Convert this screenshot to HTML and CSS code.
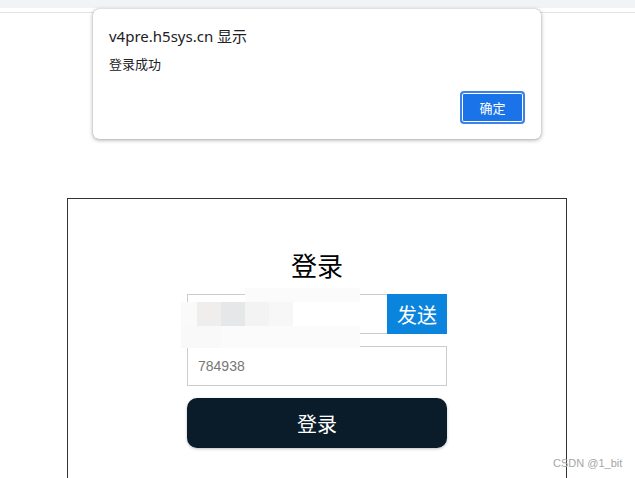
FILE: index.html
```html
<!DOCTYPE html>
<html lang="zh">
<head>
<meta charset="utf-8">
<title>登录</title>
<link rel="stylesheet" href="styles.css">
</head>
<body>
<div class="chrome-bar"></div>
<div class="chrome-line"></div>
<main class="login-box">
  <h1 class="login-title">登录</h1>
  <form class="login-form">
    <div class="phone-row">
      <input class="phone-input" type="text" value="">
      <button type="button" class="send-btn">发送</button>
      <div class="mosaic">
        <div class="mosaic-top"></div>
        <div class="mosaic-mid">
          <span class="m1"></span><span class="m2"></span><span class="m3"></span><span class="m4"></span><span class="m5"></span><span class="m6"></span>
        </div>
        <div class="mosaic-bot">
          <span class="b1"></span><span class="b2"></span><span class="b3"></span>
        </div>
      </div>
    </div>
    <input class="code-input" type="text" value="784938">
    <button type="button" class="login-btn">登录</button>
  </form>
</main>
<div class="alert-dialog">
  <div class="alert-title">v4pre.h5sys.cn 显示</div>
  <div class="alert-msg">登录成功</div>
  <div class="alert-actions"><button type="button" class="alert-ok">确定</button></div>
</div>
<div class="watermark">CSDN @1_bit</div>
</body>
</html>
```
FILE: styles.css
```css
html, body {
  margin: 0;
  padding: 0;
  background: #fff;
  width: 635px;
  height: 478px;
  overflow: hidden;
  font-family: "Noto Sans", "Noto Sans CJK SC", sans-serif;
}
.chrome-bar {
  height: 8px;
  background: #f1f3f4;
}
.chrome-line {
  margin-top: 4px;
  height: 1px;
  background: #e3e3e3;
}
.login-box {
  box-sizing: border-box;
  margin: 185px 0 0 67px;
  width: 500px;
  height: 280px;
  border: 1px solid #333;
  border-bottom: none;
  display: flex;
  flex-direction: column;
  align-items: center;
  padding-top: 48px;
}
.login-title {
  margin: 0;
  font-family: "Noto Sans CJK SC", sans-serif;
  font-size: 26px;
  font-weight: 400;
  line-height: 36px;
  color: #000;
}
.login-form {
  margin-top: 11px;
  width: 260px;
  display: flex;
  flex-direction: column;
  gap: 12px;
}
.phone-row {
  position: relative;
  display: flex;
  height: 40px;
}
.phone-input {
  box-sizing: border-box;
  flex: 1;
  height: 40px;
  border: 1px solid #ccc;
  border-right: none;
  margin: 0;
  outline: none;
}
.send-btn {
  width: 60px;
  height: 40px;
  margin: 0;
  border: none;
  background: #0a84dc;
  color: #fff;
  font-family: "Noto Sans CJK SC", sans-serif;
  font-size: 20px;
  padding: 0;
}
.mosaic {
  position: absolute;
  left: -6px;
  top: -6px;
  width: 179px;
}
.mosaic-top {
  margin-left: 64px;
  width: 115px;
  height: 14px;
  background: #fbfbfb;
}
.mosaic-mid, .mosaic-bot {
  display: flex;
}
.mosaic-mid span {
  height: 24px;
  width: 24px;
}
.mosaic-mid .m1 { width: 16px; background: #fafafa; }
.mosaic-mid .m2 { background: #efeeec; }
.mosaic-mid .m3 { background: #e6e7e9; }
.mosaic-mid .m4 { background: #f3f3f3; }
.mosaic-mid .m5 { background: #f7f7f7; }
.mosaic-mid .m6 { width: 67px; background: #fff; }
.mosaic-bot span { height: 22px; }
.mosaic-bot .b1 { width: 16px; background: #f9f9f9; }
.mosaic-bot .b2 { width: 24px; background: #f9f9f9; }
.mosaic-bot .b3 { width: 139px; background: #fbfbfb; }
.code-input {
  box-sizing: border-box;
  width: 260px;
  height: 40px;
  margin: 0;
  border: 1px solid #ccc;
  padding: 0 10px;
  font-family: "Liberation Sans", Arial, sans-serif;
  font-size: 14px;
  color: #777;
  outline: none;
}
.login-btn {
  width: 260px;
  height: 50px;
  margin: 0;
  border: none;
  border-radius: 10px;
  background: #0a1c2a;
  color: #fff;
  font-family: "Noto Sans CJK SC", sans-serif;
  font-size: 20px;
  box-shadow: 0 1px 3px rgba(0,0,0,0.25);
}
.alert-dialog {
  position: absolute;
  left: 93px;
  top: 9px;
  width: 448px;
  height: 130px;
  box-sizing: border-box;
  background: #fff;
  border-radius: 6px;
  box-shadow: 0 1px 4px rgba(0,0,0,0.35), 0 0 1px rgba(0,0,0,0.3);
  padding: 17px 16px 0 16px;
}
.alert-title {
  font-family: "Noto Sans", "Noto Sans CJK SC", sans-serif;
  font-size: 15px;
  line-height: 20px;
  color: #202124;
}
.alert-msg {
  margin-top: 9px;
  font-family: "Noto Sans CJK SC", sans-serif;
  font-size: 13px;
  line-height: 18px;
  color: #202124;
}
.alert-actions {
  display: flex;
  justify-content: flex-end;
  margin-top: 18px;
}
.alert-ok {
  box-sizing: border-box;
  width: 65px;
  height: 33px;
  margin: 0;
  border: 2px solid #3b82ea;
  border-radius: 4px;
  background: #1a73e8;
  box-shadow: inset 0 0 0 1px #fff;
  color: #fff;
  font-family: "Noto Sans CJK SC", sans-serif;
  font-size: 13px;
  padding: 0;
}
.watermark {
  position: absolute;
  left: 553px;
  top: 457px;
  font-family: "Liberation Sans", Arial, sans-serif;
  font-size: 11px;
  color: #a6a6a6;
}
```
